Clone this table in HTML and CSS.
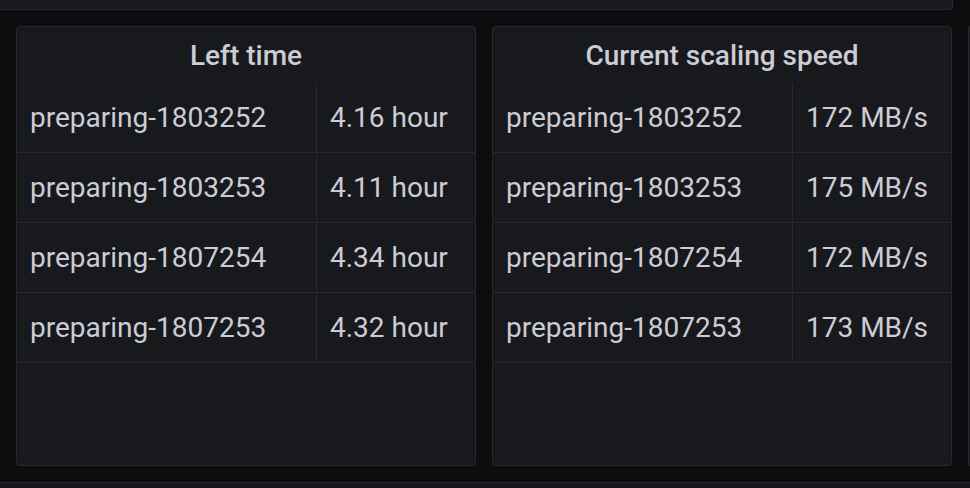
FILE: index.html
```html
<!DOCTYPE html>
<html>
<head>
<meta charset="utf-8">
<link rel="stylesheet" href="styles.css">
</head>
<body>
<div class="dash">
  <div class="panel panel-top"></div>
  <div class="row">
    <section class="panel">
      <div class="title">Left time</div>
      <div class="table">
        <div class="tr"><div class="td c1">preparing-1803252</div><div class="td c2">4.16 hour</div></div>
        <div class="tr"><div class="td c1">preparing-1803253</div><div class="td c2">4.11 hour</div></div>
        <div class="tr"><div class="td c1">preparing-1807254</div><div class="td c2">4.34 hour</div></div>
        <div class="tr"><div class="td c1">preparing-1807253</div><div class="td c2">4.32 hour</div></div>
      </div>
    </section>
    <section class="panel">
      <div class="title">Current scaling speed</div>
      <div class="table">
        <div class="tr"><div class="td c1">preparing-1803252</div><div class="td c2">172 MB/s</div></div>
        <div class="tr"><div class="td c1">preparing-1803253</div><div class="td c2">175 MB/s</div></div>
        <div class="tr"><div class="td c1">preparing-1807254</div><div class="td c2">172 MB/s</div></div>
        <div class="tr"><div class="td c1">preparing-1807253</div><div class="td c2">173 MB/s</div></div>
      </div>
    </section>
    <section class="panel panel-edge"></section>
  </div>
  <div class="panel panel-bottom"></div>
</div>
</body>
</html>
```

FILE: styles.css
```css
html, body {
  margin: 0;
  padding: 0;
  background: #0c0d0f;
  overflow: hidden;
  width: 970px;
  height: 488px;
}
.dash {
  display: flex;
  flex-direction: column;
  gap: 16px;
  font-family: Roboto, "Liberation Sans", sans-serif;
  color: #ccccd6;
}
.panel {
  background: #18191d;
  border: 1px solid #27282d;
  border-radius: 4px;
  box-sizing: border-box;
}
.panel-top {
  width: 953px;
  height: 10px;
  border-top: none;
  border-left: none;
  border-radius: 0 0 4px 0;
}
.row {
  display: grid;
  grid-template-columns: 460px 460px 1fr;
  gap: 16px;
  padding-left: 16px;
}
.row .panel {
  height: 440px;
  display: flex;
  flex-direction: column;
}
.row .panel-edge {
  border-right: none;
  border-radius: 4px 0 0 4px;
}
.panel-bottom {
  margin-left: 0;
  height: 6px;
  border-bottom: none;
  border-left: none;
  border-right: none;
  border-radius: 0;
}
.title {
  height: 56px;
  display: flex;
  align-items: center;
  justify-content: center;
  font-size: 28px;
  font-weight: 500;
  padding-top: 1px;
  box-sizing: border-box;
}
.table {
  display: flex;
  flex-direction: column;
}
.tr {
  display: flex;
  height: 70px;
  border-bottom: 1px solid #27282d;
  box-sizing: border-box;
}
.td {
  display: flex;
  align-items: center;
  font-size: 28px;
  padding: 0 14px;
  box-sizing: border-box;
  white-space: nowrap;
}
.c1 {
  width: 300px;
  padding-left: 13px;
  border-right: 1px solid #27282d;
}
.c2 {
  flex: 1;
  padding-left: 13px;
}
```
